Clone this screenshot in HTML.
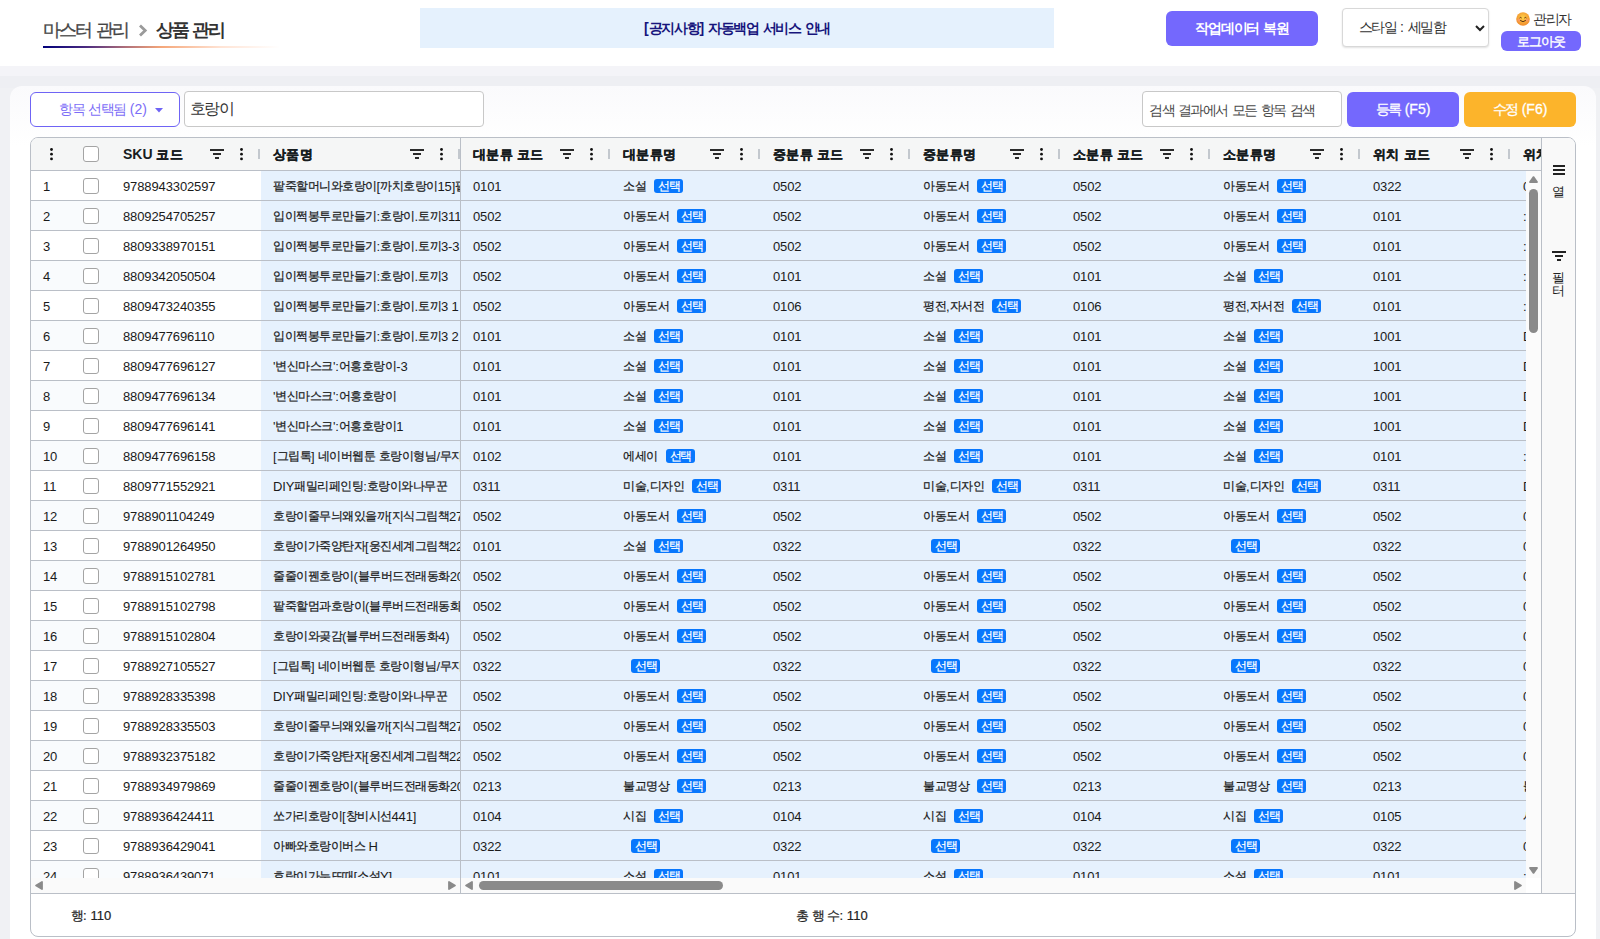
<!DOCTYPE html><html><head><meta charset="utf-8"><style>
*{box-sizing:border-box}
html,body{margin:0;padding:0}
body{width:1600px;height:939px;overflow:hidden;position:relative;background:#f0f1f4;font-family:"Liberation Sans",sans-serif;color:#181d1f}
.a{position:absolute}
.hdr{left:0;top:0;width:1600px;height:66px;background:#fff}
.band{left:0;top:66px;width:1600px;height:10px;background:#f4f4f8}
.band2{left:0;top:76px;width:1600px;height:12px;background:#eeeff3}
.card{left:10px;top:86px;width:1586px;height:900px;background:linear-gradient(#fafafc,#fff 60px);border-radius:12px}
.crumb{top:17px;font-size:18px;line-height:26px;color:#444;white-space:nowrap;-webkit-text-stroke:0.3px #444}
.crumb .k{letter-spacing:-1.9px}
.c2{font-weight:bold;color:#333;-webkit-text-stroke:0}
.c2 .k{letter-spacing:-2.4px}
.uline{left:43px;top:46px;width:237px;height:2px;background:linear-gradient(90deg,#00007a 0%,#4a2a80 18%,#b0707a 35%,#f5a77a 50%,rgba(255,200,170,.5) 75%,rgba(255,255,255,0) 100%)}
.notice{left:420px;top:8px;width:634px;height:40px;background:#e5f1fd;text-align:center;font-size:14px;line-height:40px;font-weight:bold;color:#17157c}
.notice .k{letter-spacing:-1.3px}
.btn{border-radius:6px;color:#fff;text-align:center;white-space:nowrap}
.restore{left:1166px;top:11px;width:152px;height:35px;background:#7468fd;font-size:14px;line-height:35px;font-weight:bold}
.restore .k{letter-spacing:-1.1px}
.sel{left:1342px;top:8px;width:147px;height:39px;background:#fff;border:1px solid #d8d8d8;border-radius:4px;box-shadow:0 1px 2px rgba(0,0,0,.12);font-size:14px;line-height:37px;color:#333;padding-left:16px;white-space:nowrap}
.sel .k{letter-spacing:-1.6px}
.user{left:1516px;top:10px;font-size:14px;line-height:18px;color:#333;white-space:nowrap}
.user .k{letter-spacing:-1.5px}
.logout{left:1501px;top:31px;width:80px;height:20px;background:#7468fd;font-size:13px;line-height:22px;border-radius:6px;-webkit-text-stroke:0.4px #fff}
.logout .k{letter-spacing:-1.0px}
.ddbtn{left:30px;top:92px;width:150px;height:35px;border:1.5px solid #6f64f5;border-radius:6px;background:#fff;color:#7c6df7;font-size:14px;line-height:32px;padding-left:28px;white-space:nowrap}
.ddbtn .k{letter-spacing:-1.4px}
.inp{left:184px;top:91px;width:300px;height:36px;border:1px solid #c8c8c8;border-radius:4px;background:#fff;font-size:16px;line-height:34px;padding-left:5px;color:#333}
.inp .k{letter-spacing:-1.6px}
.srch{left:1142px;top:91px;width:200px;height:36px;border:1px solid #c8c8c8;border-radius:4px;background:#fff;font-size:14px;line-height:37px;padding-left:6px;color:#4a4a4a;white-space:nowrap}
.srch .k{letter-spacing:-1.5px}
.reg{left:1347px;top:92px;width:112px;height:35px;background:#7468fd;font-size:14px;line-height:34px;-webkit-text-stroke:0.3px #fff}
.reg .k,.mod .k{letter-spacing:-1.4px}
.mod{left:1464px;top:92px;width:112px;height:35px;background:#fcb42b;font-size:14px;line-height:34px;-webkit-text-stroke:0.3px #fff}

.grid{left:30px;top:137px;width:1546px;height:800px;border:1px solid #babfc7;border-radius:8px;background:#fff;overflow:hidden}
.ghead{left:31px;top:138px;width:1510px;height:32px;background:#f5f6f6;border-top-left-radius:7px}
.hline{height:1px;background:#babfc7}
.vline{width:1px;background:#babfc7}
.ht{font-size:14px;font-weight:bold;line-height:16px;white-space:nowrap;color:#181d1f}
.ht .k{letter-spacing:0.4px;font-size:12.6px;-webkit-text-stroke:0.35px currentColor}
.fi{width:14px;height:10px}
.dots{width:3px;height:13px}
.rh{width:2px;height:10px;background:#c3c8ce}
.row{height:30px;border-bottom:1px solid #babfc7}
.c{font-size:13px;line-height:16px;white-space:nowrap;color:#1a1a1a;letter-spacing:-0.12px}
.c .k{letter-spacing:-0.5px;font-size:12.4px;-webkit-text-stroke:0.22px currentColor;position:relative;top:-0.6px}
.cb{width:16px;height:16px;border:1.5px solid #a4a4a4;border-radius:3px;background:#fff}
.badge{display:inline-block;background:#0877fd;color:#fff;font-size:12px;line-height:14px;height:14px;border-radius:3px;margin-left:8px;vertical-align:1px;padding:0 4px 0 4px;-webkit-text-stroke:0.35px #fff}
.badge .k{letter-spacing:-1.3px;font-size:12px;top:0}
.side{left:1542px;top:138px;width:33px;height:755px;background:#f9f9f9;border-top-right-radius:7px}
.status{font-size:13px;line-height:16px;white-space:nowrap;color:#222;-webkit-text-stroke:0.2px #222;letter-spacing:0.1px}
.status .k{letter-spacing:-1.0px}
</style></head><body><div class="a hdr"></div><div class="a band"></div><div class="a band2"></div><div class="a card"></div><div class="a crumb" style="left:43px"><span class="k">마스터</span> <span class="k">관리</span></div><svg class="a" style="left:138px;top:24px" width="10" height="13" viewBox="0 0 10 13"><path d="M2 1.5 L7.2 6.5 L2 11.5" stroke="#9a9a9a" stroke-width="2.8" fill="none"/></svg><div class="a crumb c2" style="left:156px"><span class="k">상품</span> <span class="k">관리</span></div><div class="a uline"></div><div class="a notice">[<span class="k">공지사항</span>] <span class="k">자동백업</span> <span class="k">서비스</span> <span class="k">안내</span></div><div class="a btn restore"><span class="k">작업데이터</span> <span class="k">복원</span></div><div class="a sel"><span class="k">스타일</span> : <span class="k">세밀함</span><svg class="a" style="left:132px;top:16px" width="10" height="7" viewBox="0 0 10 7"><path d="M1 1 L5 5 L9 1" stroke="#222" stroke-width="2" fill="none"/></svg></div><div class="a user"><svg width="14" height="14" viewBox="0 0 14 14" style="vertical-align:-2px;margin-right:3px"><defs><radialGradient id="em" cx="50%" cy="40%" r="60%"><stop offset="0" stop-color="#ffd24a"/><stop offset="1" stop-color="#f08a2a"/></radialGradient></defs><circle cx="7" cy="7" r="6.8" fill="url(#em)"/><circle cx="3" cy="8.2" r="1.6" fill="#ff8a8a" opacity=".45"/><circle cx="11" cy="8.2" r="1.6" fill="#ff8a8a" opacity=".45"/><path d="M3.6 6 Q4.6 4.8 5.6 6 M8.4 6 Q9.4 4.8 10.4 6" stroke="#5a3210" stroke-width="1" fill="none"/><path d="M4.2 8.4 Q7 11 9.8 8.4" stroke="#5a3210" stroke-width="1" fill="none"/></svg><span class="k">관리자</span></div><div class="a btn logout"><span class="k">로그아웃</span></div><div class="a ddbtn"><span class="k">항목</span> <span class="k">선택됨</span> (2) <svg width="8" height="5" viewBox="0 0 8 5" style="vertical-align:1px;margin-left:4px"><path d="M0 0 L8 0 L4 4.5Z" fill="#6f64f5"/></svg></div><div class="a inp"><span class="k">호랑이</span></div><div class="a srch"><span class="k">검색</span> <span class="k">결과에서</span> <span class="k">모든</span> <span class="k">항목</span> <span class="k">검색</span></div><div class="a btn reg"><span class="k">등록</span> (F5)</div><div class="a btn mod"><span class="k">수정</span> (F6)</div><div class="a grid"></div><div class="a ghead"></div><div class="a hline" style="left:31px;top:170px;width:1510px"></div><svg class="a dots" style="left:50px;top:148px" width="3" height="13" viewBox="0 0 3 13"><circle cx="1.5" cy="1.5" r="1.4" fill="#111"/><circle cx="1.5" cy="6.2" r="1.4" fill="#111"/><circle cx="1.5" cy="10.9" r="1.4" fill="#111"/></svg><div class="a cb" style="left:83px;top:146px"></div><div class="a ht" style="left:123px;top:146px">SKU <span class="k">코드</span></div><svg class="a fi" style="left:210px;top:149px" width="14" height="10" viewBox="0 0 14 10"><rect x="0" y="0" width="14" height="2" fill="#2b2b2b"/><rect x="3" y="4" width="8" height="2" fill="#2b2b2b"/><rect x="5" y="8" width="4" height="2" fill="#2b2b2b"/></svg><svg class="a dots" style="left:240px;top:148px" width="3" height="13" viewBox="0 0 3 13"><circle cx="1.5" cy="1.5" r="1.4" fill="#111"/><circle cx="1.5" cy="6.2" r="1.4" fill="#111"/><circle cx="1.5" cy="10.9" r="1.4" fill="#111"/></svg><div class="a rh" style="left:258px;top:149px"></div><div class="a ht" style="left:273px;top:146px"><span class="k">상품명</span></div><svg class="a fi" style="left:410px;top:149px" width="14" height="10" viewBox="0 0 14 10"><rect x="0" y="0" width="14" height="2" fill="#2b2b2b"/><rect x="3" y="4" width="8" height="2" fill="#2b2b2b"/><rect x="5" y="8" width="4" height="2" fill="#2b2b2b"/></svg><svg class="a dots" style="left:440px;top:148px" width="3" height="13" viewBox="0 0 3 13"><circle cx="1.5" cy="1.5" r="1.4" fill="#111"/><circle cx="1.5" cy="6.2" r="1.4" fill="#111"/><circle cx="1.5" cy="10.9" r="1.4" fill="#111"/></svg><div class="a rh" style="left:458px;top:149px"></div><div class="a ht" style="left:473px;top:146px"><span class="k">대분류</span> <span class="k">코드</span></div><svg class="a fi" style="left:560px;top:149px" width="14" height="10" viewBox="0 0 14 10"><rect x="0" y="0" width="14" height="2" fill="#2b2b2b"/><rect x="3" y="4" width="8" height="2" fill="#2b2b2b"/><rect x="5" y="8" width="4" height="2" fill="#2b2b2b"/></svg><svg class="a dots" style="left:590px;top:148px" width="3" height="13" viewBox="0 0 3 13"><circle cx="1.5" cy="1.5" r="1.4" fill="#111"/><circle cx="1.5" cy="6.2" r="1.4" fill="#111"/><circle cx="1.5" cy="10.9" r="1.4" fill="#111"/></svg><div class="a rh" style="left:608px;top:149px"></div><div class="a ht" style="left:623px;top:146px"><span class="k">대분류명</span></div><svg class="a fi" style="left:710px;top:149px" width="14" height="10" viewBox="0 0 14 10"><rect x="0" y="0" width="14" height="2" fill="#2b2b2b"/><rect x="3" y="4" width="8" height="2" fill="#2b2b2b"/><rect x="5" y="8" width="4" height="2" fill="#2b2b2b"/></svg><svg class="a dots" style="left:740px;top:148px" width="3" height="13" viewBox="0 0 3 13"><circle cx="1.5" cy="1.5" r="1.4" fill="#111"/><circle cx="1.5" cy="6.2" r="1.4" fill="#111"/><circle cx="1.5" cy="10.9" r="1.4" fill="#111"/></svg><div class="a rh" style="left:758px;top:149px"></div><div class="a ht" style="left:773px;top:146px"><span class="k">중분류</span> <span class="k">코드</span></div><svg class="a fi" style="left:860px;top:149px" width="14" height="10" viewBox="0 0 14 10"><rect x="0" y="0" width="14" height="2" fill="#2b2b2b"/><rect x="3" y="4" width="8" height="2" fill="#2b2b2b"/><rect x="5" y="8" width="4" height="2" fill="#2b2b2b"/></svg><svg class="a dots" style="left:890px;top:148px" width="3" height="13" viewBox="0 0 3 13"><circle cx="1.5" cy="1.5" r="1.4" fill="#111"/><circle cx="1.5" cy="6.2" r="1.4" fill="#111"/><circle cx="1.5" cy="10.9" r="1.4" fill="#111"/></svg><div class="a rh" style="left:908px;top:149px"></div><div class="a ht" style="left:923px;top:146px"><span class="k">중분류명</span></div><svg class="a fi" style="left:1010px;top:149px" width="14" height="10" viewBox="0 0 14 10"><rect x="0" y="0" width="14" height="2" fill="#2b2b2b"/><rect x="3" y="4" width="8" height="2" fill="#2b2b2b"/><rect x="5" y="8" width="4" height="2" fill="#2b2b2b"/></svg><svg class="a dots" style="left:1040px;top:148px" width="3" height="13" viewBox="0 0 3 13"><circle cx="1.5" cy="1.5" r="1.4" fill="#111"/><circle cx="1.5" cy="6.2" r="1.4" fill="#111"/><circle cx="1.5" cy="10.9" r="1.4" fill="#111"/></svg><div class="a rh" style="left:1058px;top:149px"></div><div class="a ht" style="left:1073px;top:146px"><span class="k">소분류</span> <span class="k">코드</span></div><svg class="a fi" style="left:1160px;top:149px" width="14" height="10" viewBox="0 0 14 10"><rect x="0" y="0" width="14" height="2" fill="#2b2b2b"/><rect x="3" y="4" width="8" height="2" fill="#2b2b2b"/><rect x="5" y="8" width="4" height="2" fill="#2b2b2b"/></svg><svg class="a dots" style="left:1190px;top:148px" width="3" height="13" viewBox="0 0 3 13"><circle cx="1.5" cy="1.5" r="1.4" fill="#111"/><circle cx="1.5" cy="6.2" r="1.4" fill="#111"/><circle cx="1.5" cy="10.9" r="1.4" fill="#111"/></svg><div class="a rh" style="left:1208px;top:149px"></div><div class="a ht" style="left:1223px;top:146px"><span class="k">소분류명</span></div><svg class="a fi" style="left:1310px;top:149px" width="14" height="10" viewBox="0 0 14 10"><rect x="0" y="0" width="14" height="2" fill="#2b2b2b"/><rect x="3" y="4" width="8" height="2" fill="#2b2b2b"/><rect x="5" y="8" width="4" height="2" fill="#2b2b2b"/></svg><svg class="a dots" style="left:1340px;top:148px" width="3" height="13" viewBox="0 0 3 13"><circle cx="1.5" cy="1.5" r="1.4" fill="#111"/><circle cx="1.5" cy="6.2" r="1.4" fill="#111"/><circle cx="1.5" cy="10.9" r="1.4" fill="#111"/></svg><div class="a rh" style="left:1358px;top:149px"></div><div class="a ht" style="left:1373px;top:146px"><span class="k">위치</span> <span class="k">코드</span></div><svg class="a fi" style="left:1460px;top:149px" width="14" height="10" viewBox="0 0 14 10"><rect x="0" y="0" width="14" height="2" fill="#2b2b2b"/><rect x="3" y="4" width="8" height="2" fill="#2b2b2b"/><rect x="5" y="8" width="4" height="2" fill="#2b2b2b"/></svg><svg class="a dots" style="left:1490px;top:148px" width="3" height="13" viewBox="0 0 3 13"><circle cx="1.5" cy="1.5" r="1.4" fill="#111"/><circle cx="1.5" cy="6.2" r="1.4" fill="#111"/><circle cx="1.5" cy="10.9" r="1.4" fill="#111"/></svg><div class="a rh" style="left:1508px;top:149px"></div><div class="a" style="left:1511px;top:138px;width:30px;height:32px;overflow:hidden"><div class="a ht" style="left:12px;top:8px"><span class="k">위치</span> <span class="k">명</span></div></div><div class="a" style="left:31px;top:171px;width:1495px;height:707px;overflow:hidden"><div class="a row" style="left:0;top:0px;width:230px;background:#fff"></div><div class="a row" style="left:230px;top:0px;width:1265px;background:#e6f1fd"></div><div class="a c" style="left:12px;top:8px">1</div><div class="a cb" style="left:52px;top:7px"></div><div class="a c" style="left:92px;top:8px">9788943302597</div><div class="a" style="left:242px;top:8px;width:187px;height:18px;overflow:hidden"><div class="c"><span class="k">팥죽할머니와호랑이</span>[<span class="k">까치호랑이</span>15]<span class="k">팥죽</span></div></div><div class="a c" style="left:442px;top:8px">0101</div><div class="a c" style="left:592px;top:8px"><span class="k">소설</span><span class="badge"><span class="k">선택</span></span></div><div class="a c" style="left:742px;top:8px">0502</div><div class="a c" style="left:892px;top:8px"><span class="k">아동도서</span><span class="badge"><span class="k">선택</span></span></div><div class="a c" style="left:1042px;top:8px">0502</div><div class="a c" style="left:1192px;top:8px"><span class="k">아동도서</span><span class="badge"><span class="k">선택</span></span></div><div class="a c" style="left:1342px;top:8px">0322</div><div class="a c" style="left:1492px;top:8px">0</div><div class="a row" style="left:0;top:30px;width:230px;background:#f9fbfd"></div><div class="a row" style="left:230px;top:30px;width:1265px;background:#e6f1fd"></div><div class="a c" style="left:12px;top:38px">2</div><div class="a cb" style="left:52px;top:37px"></div><div class="a c" style="left:92px;top:38px">8809254705257</div><div class="a" style="left:242px;top:38px;width:187px;height:18px;overflow:hidden"><div class="c"><span class="k">입이쩍봉투로만들기</span>:<span class="k">호랑이</span>.<span class="k">토끼</span>311</div></div><div class="a c" style="left:442px;top:38px">0502</div><div class="a c" style="left:592px;top:38px"><span class="k">아동도서</span><span class="badge"><span class="k">선택</span></span></div><div class="a c" style="left:742px;top:38px">0502</div><div class="a c" style="left:892px;top:38px"><span class="k">아동도서</span><span class="badge"><span class="k">선택</span></span></div><div class="a c" style="left:1042px;top:38px">0502</div><div class="a c" style="left:1192px;top:38px"><span class="k">아동도서</span><span class="badge"><span class="k">선택</span></span></div><div class="a c" style="left:1342px;top:38px">0101</div><div class="a c" style="left:1492px;top:38px">:</div><div class="a row" style="left:0;top:60px;width:230px;background:#fff"></div><div class="a row" style="left:230px;top:60px;width:1265px;background:#e6f1fd"></div><div class="a c" style="left:12px;top:68px">3</div><div class="a cb" style="left:52px;top:67px"></div><div class="a c" style="left:92px;top:68px">8809338970151</div><div class="a" style="left:242px;top:68px;width:187px;height:18px;overflow:hidden"><div class="c"><span class="k">입이쩍봉투로만들기</span>:<span class="k">호랑이</span>.<span class="k">토끼</span>3-3</div></div><div class="a c" style="left:442px;top:68px">0502</div><div class="a c" style="left:592px;top:68px"><span class="k">아동도서</span><span class="badge"><span class="k">선택</span></span></div><div class="a c" style="left:742px;top:68px">0502</div><div class="a c" style="left:892px;top:68px"><span class="k">아동도서</span><span class="badge"><span class="k">선택</span></span></div><div class="a c" style="left:1042px;top:68px">0502</div><div class="a c" style="left:1192px;top:68px"><span class="k">아동도서</span><span class="badge"><span class="k">선택</span></span></div><div class="a c" style="left:1342px;top:68px">0101</div><div class="a c" style="left:1492px;top:68px">:</div><div class="a row" style="left:0;top:90px;width:230px;background:#f9fbfd"></div><div class="a row" style="left:230px;top:90px;width:1265px;background:#e6f1fd"></div><div class="a c" style="left:12px;top:98px">4</div><div class="a cb" style="left:52px;top:97px"></div><div class="a c" style="left:92px;top:98px">8809342050504</div><div class="a" style="left:242px;top:98px;width:187px;height:18px;overflow:hidden"><div class="c"><span class="k">입이쩍봉투로만들기</span>:<span class="k">호랑이</span>.<span class="k">토끼</span>3</div></div><div class="a c" style="left:442px;top:98px">0502</div><div class="a c" style="left:592px;top:98px"><span class="k">아동도서</span><span class="badge"><span class="k">선택</span></span></div><div class="a c" style="left:742px;top:98px">0101</div><div class="a c" style="left:892px;top:98px"><span class="k">소설</span><span class="badge"><span class="k">선택</span></span></div><div class="a c" style="left:1042px;top:98px">0101</div><div class="a c" style="left:1192px;top:98px"><span class="k">소설</span><span class="badge"><span class="k">선택</span></span></div><div class="a c" style="left:1342px;top:98px">0101</div><div class="a c" style="left:1492px;top:98px">:</div><div class="a row" style="left:0;top:120px;width:230px;background:#fff"></div><div class="a row" style="left:230px;top:120px;width:1265px;background:#e6f1fd"></div><div class="a c" style="left:12px;top:128px">5</div><div class="a cb" style="left:52px;top:127px"></div><div class="a c" style="left:92px;top:128px">8809473240355</div><div class="a" style="left:242px;top:128px;width:187px;height:18px;overflow:hidden"><div class="c"><span class="k">입이쩍봉투로만들기</span>:<span class="k">호랑이</span>.<span class="k">토끼</span>3 1</div></div><div class="a c" style="left:442px;top:128px">0502</div><div class="a c" style="left:592px;top:128px"><span class="k">아동도서</span><span class="badge"><span class="k">선택</span></span></div><div class="a c" style="left:742px;top:128px">0106</div><div class="a c" style="left:892px;top:128px"><span class="k">평전</span>,<span class="k">자서전</span><span class="badge"><span class="k">선택</span></span></div><div class="a c" style="left:1042px;top:128px">0106</div><div class="a c" style="left:1192px;top:128px"><span class="k">평전</span>,<span class="k">자서전</span><span class="badge"><span class="k">선택</span></span></div><div class="a c" style="left:1342px;top:128px">0101</div><div class="a c" style="left:1492px;top:128px">:</div><div class="a row" style="left:0;top:150px;width:230px;background:#f9fbfd"></div><div class="a row" style="left:230px;top:150px;width:1265px;background:#e6f1fd"></div><div class="a c" style="left:12px;top:158px">6</div><div class="a cb" style="left:52px;top:157px"></div><div class="a c" style="left:92px;top:158px">8809477696110</div><div class="a" style="left:242px;top:158px;width:187px;height:18px;overflow:hidden"><div class="c"><span class="k">입이쩍봉투로만들기</span>:<span class="k">호랑이</span>.<span class="k">토끼</span>3 2</div></div><div class="a c" style="left:442px;top:158px">0101</div><div class="a c" style="left:592px;top:158px"><span class="k">소설</span><span class="badge"><span class="k">선택</span></span></div><div class="a c" style="left:742px;top:158px">0101</div><div class="a c" style="left:892px;top:158px"><span class="k">소설</span><span class="badge"><span class="k">선택</span></span></div><div class="a c" style="left:1042px;top:158px">0101</div><div class="a c" style="left:1192px;top:158px"><span class="k">소설</span><span class="badge"><span class="k">선택</span></span></div><div class="a c" style="left:1342px;top:158px">1001</div><div class="a c" style="left:1492px;top:158px">D</div><div class="a row" style="left:0;top:180px;width:230px;background:#fff"></div><div class="a row" style="left:230px;top:180px;width:1265px;background:#e6f1fd"></div><div class="a c" style="left:12px;top:188px">7</div><div class="a cb" style="left:52px;top:187px"></div><div class="a c" style="left:92px;top:188px">8809477696127</div><div class="a" style="left:242px;top:188px;width:187px;height:18px;overflow:hidden"><div class="c">&#x27;<span class="k">변신마스크</span>&#x27;:<span class="k">어흥호랑이</span>-3</div></div><div class="a c" style="left:442px;top:188px">0101</div><div class="a c" style="left:592px;top:188px"><span class="k">소설</span><span class="badge"><span class="k">선택</span></span></div><div class="a c" style="left:742px;top:188px">0101</div><div class="a c" style="left:892px;top:188px"><span class="k">소설</span><span class="badge"><span class="k">선택</span></span></div><div class="a c" style="left:1042px;top:188px">0101</div><div class="a c" style="left:1192px;top:188px"><span class="k">소설</span><span class="badge"><span class="k">선택</span></span></div><div class="a c" style="left:1342px;top:188px">1001</div><div class="a c" style="left:1492px;top:188px">D</div><div class="a row" style="left:0;top:210px;width:230px;background:#f9fbfd"></div><div class="a row" style="left:230px;top:210px;width:1265px;background:#e6f1fd"></div><div class="a c" style="left:12px;top:218px">8</div><div class="a cb" style="left:52px;top:217px"></div><div class="a c" style="left:92px;top:218px">8809477696134</div><div class="a" style="left:242px;top:218px;width:187px;height:18px;overflow:hidden"><div class="c">&#x27;<span class="k">변신마스크</span>&#x27;:<span class="k">어흥호랑이</span></div></div><div class="a c" style="left:442px;top:218px">0101</div><div class="a c" style="left:592px;top:218px"><span class="k">소설</span><span class="badge"><span class="k">선택</span></span></div><div class="a c" style="left:742px;top:218px">0101</div><div class="a c" style="left:892px;top:218px"><span class="k">소설</span><span class="badge"><span class="k">선택</span></span></div><div class="a c" style="left:1042px;top:218px">0101</div><div class="a c" style="left:1192px;top:218px"><span class="k">소설</span><span class="badge"><span class="k">선택</span></span></div><div class="a c" style="left:1342px;top:218px">1001</div><div class="a c" style="left:1492px;top:218px">D</div><div class="a row" style="left:0;top:240px;width:230px;background:#fff"></div><div class="a row" style="left:230px;top:240px;width:1265px;background:#e6f1fd"></div><div class="a c" style="left:12px;top:248px">9</div><div class="a cb" style="left:52px;top:247px"></div><div class="a c" style="left:92px;top:248px">8809477696141</div><div class="a" style="left:242px;top:248px;width:187px;height:18px;overflow:hidden"><div class="c">&#x27;<span class="k">변신마스크</span>&#x27;:<span class="k">어흥호랑이</span>1</div></div><div class="a c" style="left:442px;top:248px">0101</div><div class="a c" style="left:592px;top:248px"><span class="k">소설</span><span class="badge"><span class="k">선택</span></span></div><div class="a c" style="left:742px;top:248px">0101</div><div class="a c" style="left:892px;top:248px"><span class="k">소설</span><span class="badge"><span class="k">선택</span></span></div><div class="a c" style="left:1042px;top:248px">0101</div><div class="a c" style="left:1192px;top:248px"><span class="k">소설</span><span class="badge"><span class="k">선택</span></span></div><div class="a c" style="left:1342px;top:248px">1001</div><div class="a c" style="left:1492px;top:248px">D</div><div class="a row" style="left:0;top:270px;width:230px;background:#f9fbfd"></div><div class="a row" style="left:230px;top:270px;width:1265px;background:#e6f1fd"></div><div class="a c" style="left:12px;top:278px">10</div><div class="a cb" style="left:52px;top:277px"></div><div class="a c" style="left:92px;top:278px">8809477696158</div><div class="a" style="left:242px;top:278px;width:187px;height:18px;overflow:hidden"><div class="c">[<span class="k">그립톡</span>] <span class="k">네이버웹툰</span> <span class="k">호랑이형님</span>/<span class="k">무지개</span></div></div><div class="a c" style="left:442px;top:278px">0102</div><div class="a c" style="left:592px;top:278px"><span class="k">에세이</span><span class="badge"><span class="k">선택</span></span></div><div class="a c" style="left:742px;top:278px">0101</div><div class="a c" style="left:892px;top:278px"><span class="k">소설</span><span class="badge"><span class="k">선택</span></span></div><div class="a c" style="left:1042px;top:278px">0101</div><div class="a c" style="left:1192px;top:278px"><span class="k">소설</span><span class="badge"><span class="k">선택</span></span></div><div class="a c" style="left:1342px;top:278px">0101</div><div class="a c" style="left:1492px;top:278px">:</div><div class="a row" style="left:0;top:300px;width:230px;background:#fff"></div><div class="a row" style="left:230px;top:300px;width:1265px;background:#e6f1fd"></div><div class="a c" style="left:12px;top:308px">11</div><div class="a cb" style="left:52px;top:307px"></div><div class="a c" style="left:92px;top:308px">8809771552921</div><div class="a" style="left:242px;top:308px;width:187px;height:18px;overflow:hidden"><div class="c">DIY<span class="k">패밀리페인팅</span>:<span class="k">호랑이와나무꾼</span></div></div><div class="a c" style="left:442px;top:308px">0311</div><div class="a c" style="left:592px;top:308px"><span class="k">미술</span>,<span class="k">디자인</span><span class="badge"><span class="k">선택</span></span></div><div class="a c" style="left:742px;top:308px">0311</div><div class="a c" style="left:892px;top:308px"><span class="k">미술</span>,<span class="k">디자인</span><span class="badge"><span class="k">선택</span></span></div><div class="a c" style="left:1042px;top:308px">0311</div><div class="a c" style="left:1192px;top:308px"><span class="k">미술</span>,<span class="k">디자인</span><span class="badge"><span class="k">선택</span></span></div><div class="a c" style="left:1342px;top:308px">0311</div><div class="a c" style="left:1492px;top:308px">D</div><div class="a row" style="left:0;top:330px;width:230px;background:#f9fbfd"></div><div class="a row" style="left:230px;top:330px;width:1265px;background:#e6f1fd"></div><div class="a c" style="left:12px;top:338px">12</div><div class="a cb" style="left:52px;top:337px"></div><div class="a c" style="left:92px;top:338px">9788901104249</div><div class="a" style="left:242px;top:338px;width:187px;height:18px;overflow:hidden"><div class="c"><span class="k">호랑이줄무늬왜있을까</span>[<span class="k">지식그림책</span>27]</div></div><div class="a c" style="left:442px;top:338px">0502</div><div class="a c" style="left:592px;top:338px"><span class="k">아동도서</span><span class="badge"><span class="k">선택</span></span></div><div class="a c" style="left:742px;top:338px">0502</div><div class="a c" style="left:892px;top:338px"><span class="k">아동도서</span><span class="badge"><span class="k">선택</span></span></div><div class="a c" style="left:1042px;top:338px">0502</div><div class="a c" style="left:1192px;top:338px"><span class="k">아동도서</span><span class="badge"><span class="k">선택</span></span></div><div class="a c" style="left:1342px;top:338px">0502</div><div class="a c" style="left:1492px;top:338px">0</div><div class="a row" style="left:0;top:360px;width:230px;background:#fff"></div><div class="a row" style="left:230px;top:360px;width:1265px;background:#e6f1fd"></div><div class="a c" style="left:12px;top:368px">13</div><div class="a cb" style="left:52px;top:367px"></div><div class="a c" style="left:92px;top:368px">9788901264950</div><div class="a" style="left:242px;top:368px;width:187px;height:18px;overflow:hidden"><div class="c"><span class="k">호랑이가죽양탄자</span>[<span class="k">웅진세계그림책</span>22]</div></div><div class="a c" style="left:442px;top:368px">0101</div><div class="a c" style="left:592px;top:368px"><span class="k">소설</span><span class="badge"><span class="k">선택</span></span></div><div class="a c" style="left:742px;top:368px">0322</div><div class="a c" style="left:892px;top:368px"><span class="badge"><span class="k">선택</span></span></div><div class="a c" style="left:1042px;top:368px">0322</div><div class="a c" style="left:1192px;top:368px"><span class="badge"><span class="k">선택</span></span></div><div class="a c" style="left:1342px;top:368px">0322</div><div class="a c" style="left:1492px;top:368px">0</div><div class="a row" style="left:0;top:390px;width:230px;background:#f9fbfd"></div><div class="a row" style="left:230px;top:390px;width:1265px;background:#e6f1fd"></div><div class="a c" style="left:12px;top:398px">14</div><div class="a cb" style="left:52px;top:397px"></div><div class="a c" style="left:92px;top:398px">9788915102781</div><div class="a" style="left:242px;top:398px;width:187px;height:18px;overflow:hidden"><div class="c"><span class="k">줄줄이꿴호랑이</span>(<span class="k">블루버드전래동화</span>20)</div></div><div class="a c" style="left:442px;top:398px">0502</div><div class="a c" style="left:592px;top:398px"><span class="k">아동도서</span><span class="badge"><span class="k">선택</span></span></div><div class="a c" style="left:742px;top:398px">0502</div><div class="a c" style="left:892px;top:398px"><span class="k">아동도서</span><span class="badge"><span class="k">선택</span></span></div><div class="a c" style="left:1042px;top:398px">0502</div><div class="a c" style="left:1192px;top:398px"><span class="k">아동도서</span><span class="badge"><span class="k">선택</span></span></div><div class="a c" style="left:1342px;top:398px">0502</div><div class="a c" style="left:1492px;top:398px">0</div><div class="a row" style="left:0;top:420px;width:230px;background:#fff"></div><div class="a row" style="left:230px;top:420px;width:1265px;background:#e6f1fd"></div><div class="a c" style="left:12px;top:428px">15</div><div class="a cb" style="left:52px;top:427px"></div><div class="a c" style="left:92px;top:428px">9788915102798</div><div class="a" style="left:242px;top:428px;width:187px;height:18px;overflow:hidden"><div class="c"><span class="k">팥죽할멈과호랑이</span>(<span class="k">블루버드전래동화</span>)</div></div><div class="a c" style="left:442px;top:428px">0502</div><div class="a c" style="left:592px;top:428px"><span class="k">아동도서</span><span class="badge"><span class="k">선택</span></span></div><div class="a c" style="left:742px;top:428px">0502</div><div class="a c" style="left:892px;top:428px"><span class="k">아동도서</span><span class="badge"><span class="k">선택</span></span></div><div class="a c" style="left:1042px;top:428px">0502</div><div class="a c" style="left:1192px;top:428px"><span class="k">아동도서</span><span class="badge"><span class="k">선택</span></span></div><div class="a c" style="left:1342px;top:428px">0502</div><div class="a c" style="left:1492px;top:428px">0</div><div class="a row" style="left:0;top:450px;width:230px;background:#f9fbfd"></div><div class="a row" style="left:230px;top:450px;width:1265px;background:#e6f1fd"></div><div class="a c" style="left:12px;top:458px">16</div><div class="a cb" style="left:52px;top:457px"></div><div class="a c" style="left:92px;top:458px">9788915102804</div><div class="a" style="left:242px;top:458px;width:187px;height:18px;overflow:hidden"><div class="c"><span class="k">호랑이와곶감</span>(<span class="k">블루버드전래동화</span>4)</div></div><div class="a c" style="left:442px;top:458px">0502</div><div class="a c" style="left:592px;top:458px"><span class="k">아동도서</span><span class="badge"><span class="k">선택</span></span></div><div class="a c" style="left:742px;top:458px">0502</div><div class="a c" style="left:892px;top:458px"><span class="k">아동도서</span><span class="badge"><span class="k">선택</span></span></div><div class="a c" style="left:1042px;top:458px">0502</div><div class="a c" style="left:1192px;top:458px"><span class="k">아동도서</span><span class="badge"><span class="k">선택</span></span></div><div class="a c" style="left:1342px;top:458px">0502</div><div class="a c" style="left:1492px;top:458px">0</div><div class="a row" style="left:0;top:480px;width:230px;background:#fff"></div><div class="a row" style="left:230px;top:480px;width:1265px;background:#e6f1fd"></div><div class="a c" style="left:12px;top:488px">17</div><div class="a cb" style="left:52px;top:487px"></div><div class="a c" style="left:92px;top:488px">9788927105527</div><div class="a" style="left:242px;top:488px;width:187px;height:18px;overflow:hidden"><div class="c">[<span class="k">그립톡</span>] <span class="k">네이버웹툰</span> <span class="k">호랑이형님</span>/<span class="k">무지개</span></div></div><div class="a c" style="left:442px;top:488px">0322</div><div class="a c" style="left:592px;top:488px"><span class="badge"><span class="k">선택</span></span></div><div class="a c" style="left:742px;top:488px">0322</div><div class="a c" style="left:892px;top:488px"><span class="badge"><span class="k">선택</span></span></div><div class="a c" style="left:1042px;top:488px">0322</div><div class="a c" style="left:1192px;top:488px"><span class="badge"><span class="k">선택</span></span></div><div class="a c" style="left:1342px;top:488px">0322</div><div class="a c" style="left:1492px;top:488px">0</div><div class="a row" style="left:0;top:510px;width:230px;background:#f9fbfd"></div><div class="a row" style="left:230px;top:510px;width:1265px;background:#e6f1fd"></div><div class="a c" style="left:12px;top:518px">18</div><div class="a cb" style="left:52px;top:517px"></div><div class="a c" style="left:92px;top:518px">9788928335398</div><div class="a" style="left:242px;top:518px;width:187px;height:18px;overflow:hidden"><div class="c">DIY<span class="k">패밀리페인팅</span>:<span class="k">호랑이와나무꾼</span></div></div><div class="a c" style="left:442px;top:518px">0502</div><div class="a c" style="left:592px;top:518px"><span class="k">아동도서</span><span class="badge"><span class="k">선택</span></span></div><div class="a c" style="left:742px;top:518px">0502</div><div class="a c" style="left:892px;top:518px"><span class="k">아동도서</span><span class="badge"><span class="k">선택</span></span></div><div class="a c" style="left:1042px;top:518px">0502</div><div class="a c" style="left:1192px;top:518px"><span class="k">아동도서</span><span class="badge"><span class="k">선택</span></span></div><div class="a c" style="left:1342px;top:518px">0502</div><div class="a c" style="left:1492px;top:518px">0</div><div class="a row" style="left:0;top:540px;width:230px;background:#fff"></div><div class="a row" style="left:230px;top:540px;width:1265px;background:#e6f1fd"></div><div class="a c" style="left:12px;top:548px">19</div><div class="a cb" style="left:52px;top:547px"></div><div class="a c" style="left:92px;top:548px">9788928335503</div><div class="a" style="left:242px;top:548px;width:187px;height:18px;overflow:hidden"><div class="c"><span class="k">호랑이줄무늬왜있을까</span>[<span class="k">지식그림책</span>27]</div></div><div class="a c" style="left:442px;top:548px">0502</div><div class="a c" style="left:592px;top:548px"><span class="k">아동도서</span><span class="badge"><span class="k">선택</span></span></div><div class="a c" style="left:742px;top:548px">0502</div><div class="a c" style="left:892px;top:548px"><span class="k">아동도서</span><span class="badge"><span class="k">선택</span></span></div><div class="a c" style="left:1042px;top:548px">0502</div><div class="a c" style="left:1192px;top:548px"><span class="k">아동도서</span><span class="badge"><span class="k">선택</span></span></div><div class="a c" style="left:1342px;top:548px">0502</div><div class="a c" style="left:1492px;top:548px">0</div><div class="a row" style="left:0;top:570px;width:230px;background:#f9fbfd"></div><div class="a row" style="left:230px;top:570px;width:1265px;background:#e6f1fd"></div><div class="a c" style="left:12px;top:578px">20</div><div class="a cb" style="left:52px;top:577px"></div><div class="a c" style="left:92px;top:578px">9788932375182</div><div class="a" style="left:242px;top:578px;width:187px;height:18px;overflow:hidden"><div class="c"><span class="k">호랑이가죽양탄자</span>[<span class="k">웅진세계그림책</span>22]</div></div><div class="a c" style="left:442px;top:578px">0502</div><div class="a c" style="left:592px;top:578px"><span class="k">아동도서</span><span class="badge"><span class="k">선택</span></span></div><div class="a c" style="left:742px;top:578px">0502</div><div class="a c" style="left:892px;top:578px"><span class="k">아동도서</span><span class="badge"><span class="k">선택</span></span></div><div class="a c" style="left:1042px;top:578px">0502</div><div class="a c" style="left:1192px;top:578px"><span class="k">아동도서</span><span class="badge"><span class="k">선택</span></span></div><div class="a c" style="left:1342px;top:578px">0502</div><div class="a c" style="left:1492px;top:578px">0</div><div class="a row" style="left:0;top:600px;width:230px;background:#fff"></div><div class="a row" style="left:230px;top:600px;width:1265px;background:#e6f1fd"></div><div class="a c" style="left:12px;top:608px">21</div><div class="a cb" style="left:52px;top:607px"></div><div class="a c" style="left:92px;top:608px">9788934979869</div><div class="a" style="left:242px;top:608px;width:187px;height:18px;overflow:hidden"><div class="c"><span class="k">줄줄이꿴호랑이</span>(<span class="k">블루버드전래동화</span>20)</div></div><div class="a c" style="left:442px;top:608px">0213</div><div class="a c" style="left:592px;top:608px"><span class="k">불교명상</span><span class="badge"><span class="k">선택</span></span></div><div class="a c" style="left:742px;top:608px">0213</div><div class="a c" style="left:892px;top:608px"><span class="k">불교명상</span><span class="badge"><span class="k">선택</span></span></div><div class="a c" style="left:1042px;top:608px">0213</div><div class="a c" style="left:1192px;top:608px"><span class="k">불교명상</span><span class="badge"><span class="k">선택</span></span></div><div class="a c" style="left:1342px;top:608px">0213</div><div class="a c" style="left:1492px;top:608px"><span class="k">불</span></div><div class="a row" style="left:0;top:630px;width:230px;background:#f9fbfd"></div><div class="a row" style="left:230px;top:630px;width:1265px;background:#e6f1fd"></div><div class="a c" style="left:12px;top:638px">22</div><div class="a cb" style="left:52px;top:637px"></div><div class="a c" style="left:92px;top:638px">9788936424411</div><div class="a" style="left:242px;top:638px;width:187px;height:18px;overflow:hidden"><div class="c"><span class="k">쏘가리호랑이</span>[<span class="k">창비시선</span>441]</div></div><div class="a c" style="left:442px;top:638px">0104</div><div class="a c" style="left:592px;top:638px"><span class="k">시집</span><span class="badge"><span class="k">선택</span></span></div><div class="a c" style="left:742px;top:638px">0104</div><div class="a c" style="left:892px;top:638px"><span class="k">시집</span><span class="badge"><span class="k">선택</span></span></div><div class="a c" style="left:1042px;top:638px">0104</div><div class="a c" style="left:1192px;top:638px"><span class="k">시집</span><span class="badge"><span class="k">선택</span></span></div><div class="a c" style="left:1342px;top:638px">0105</div><div class="a c" style="left:1492px;top:638px"><span class="k">시</span></div><div class="a row" style="left:0;top:660px;width:230px;background:#fff"></div><div class="a row" style="left:230px;top:660px;width:1265px;background:#e6f1fd"></div><div class="a c" style="left:12px;top:668px">23</div><div class="a cb" style="left:52px;top:667px"></div><div class="a c" style="left:92px;top:668px">9788936429041</div><div class="a" style="left:242px;top:668px;width:187px;height:18px;overflow:hidden"><div class="c"><span class="k">아빠와호랑이버스</span> H</div></div><div class="a c" style="left:442px;top:668px">0322</div><div class="a c" style="left:592px;top:668px"><span class="badge"><span class="k">선택</span></span></div><div class="a c" style="left:742px;top:668px">0322</div><div class="a c" style="left:892px;top:668px"><span class="badge"><span class="k">선택</span></span></div><div class="a c" style="left:1042px;top:668px">0322</div><div class="a c" style="left:1192px;top:668px"><span class="badge"><span class="k">선택</span></span></div><div class="a c" style="left:1342px;top:668px">0322</div><div class="a c" style="left:1492px;top:668px">0</div><div class="a row" style="left:0;top:690px;width:230px;background:#f9fbfd"></div><div class="a row" style="left:230px;top:690px;width:1265px;background:#e6f1fd"></div><div class="a c" style="left:12px;top:698px">24</div><div class="a cb" style="left:52px;top:697px"></div><div class="a c" style="left:92px;top:698px">9788936439071</div><div class="a" style="left:242px;top:698px;width:187px;height:18px;overflow:hidden"><div class="c"><span class="k">호랑이가누뜨때</span>[<span class="k">소설</span>Y]</div></div><div class="a c" style="left:442px;top:698px">0101</div><div class="a c" style="left:592px;top:698px"><span class="k">소설</span><span class="badge"><span class="k">선택</span></span></div><div class="a c" style="left:742px;top:698px">0101</div><div class="a c" style="left:892px;top:698px"><span class="k">소설</span><span class="badge"><span class="k">선택</span></span></div><div class="a c" style="left:1042px;top:698px">0101</div><div class="a c" style="left:1192px;top:698px"><span class="k">소설</span><span class="badge"><span class="k">선택</span></span></div><div class="a c" style="left:1342px;top:698px">0101</div><div class="a c" style="left:1492px;top:698px">:</div></div><div class="a vline" style="left:460px;top:138px;height:755px"></div><div class="a" style="left:1526px;top:171px;width:15px;height:707px;background:#fbfbfb"></div><div class="a" style="left:1526px;top:878px;width:15px;height:15px;background:#fff"></div><svg class="a" style="left:1529px;top:176px" width="9" height="7" viewBox="0 0 9 7"><path d="M4.5 1.1 L8.0 6.0 L1.0 6.0Z" fill="#8a8a8a" stroke="#8a8a8a" stroke-width="1.8" stroke-linejoin="round"/></svg><div class="a" style="left:1529px;top:189px;width:9px;height:144px;background:#8a8a8a;border-radius:5px"></div><svg class="a" style="left:1529px;top:867px" width="9" height="7" viewBox="0 0 9 7"><path d="M4.5 5.9 L8.0 1.0 L1.0 1.0Z" fill="#8a8a8a" stroke="#8a8a8a" stroke-width="1.8" stroke-linejoin="round"/></svg><div class="a" style="left:31px;top:878px;width:1495px;height:15px;background:#fafafa"></div><svg class="a" style="left:35px;top:881px" width="8" height="9" viewBox="0 0 8 9"><path d="M1.1 4.5 L7.0 1.0 L7.0 8.0Z" fill="#8a8a8a" stroke="#8a8a8a" stroke-width="1.8" stroke-linejoin="round"/></svg><svg class="a" style="left:448px;top:881px" width="8" height="9" viewBox="0 0 8 9"><path d="M6.9 4.5 L1.0 1.0 L1.0 8.0Z" fill="#8a8a8a" stroke="#8a8a8a" stroke-width="1.8" stroke-linejoin="round"/></svg><svg class="a" style="left:465px;top:881px" width="8" height="9" viewBox="0 0 8 9"><path d="M1.1 4.5 L7.0 1.0 L7.0 8.0Z" fill="#8a8a8a" stroke="#8a8a8a" stroke-width="1.8" stroke-linejoin="round"/></svg><div class="a" style="left:479px;top:881px;width:244px;height:9px;background:#8a8a8a;border-radius:5px"></div><svg class="a" style="left:1514px;top:881px" width="8" height="9" viewBox="0 0 8 9"><path d="M6.9 4.5 L1.0 1.0 L1.0 8.0Z" fill="#8a8a8a" stroke="#8a8a8a" stroke-width="1.8" stroke-linejoin="round"/></svg><div class="a vline" style="left:460px;top:878px;height:15px"></div><div class="a side"></div><div class="a vline" style="left:1541px;top:138px;height:755px"></div><svg class="a" style="left:1553px;top:165px" width="12" height="10" viewBox="0 0 12 10"><rect y="0" width="12" height="2" fill="#222"/><rect y="4" width="12" height="2" fill="#222"/><rect y="8" width="12" height="2" fill="#222"/></svg><div class="a" style="left:1552px;top:184px;font-size:13px;line-height:16px;color:#222">열</div><svg class="a" style="left:1552px;top:251px" width="14" height="10" viewBox="0 0 14 10"><rect x="0" y="0" width="14" height="2" fill="#222"/><rect x="3" y="4" width="8" height="2" fill="#222"/><rect x="5" y="8" width="4" height="2" fill="#222"/></svg><div class="a" style="left:1552px;top:271px;font-size:13px;line-height:13px;color:#222">필<br>터</div><div class="a hline" style="left:31px;top:893px;width:1544px"></div><div class="a status" style="left:71px;top:908px"><span class="k">행</span>: 110</div><div class="a status" style="left:796px;top:908px"><span class="k">총</span> <span class="k">행</span> <span class="k">수</span>: 110</div></body></html>
